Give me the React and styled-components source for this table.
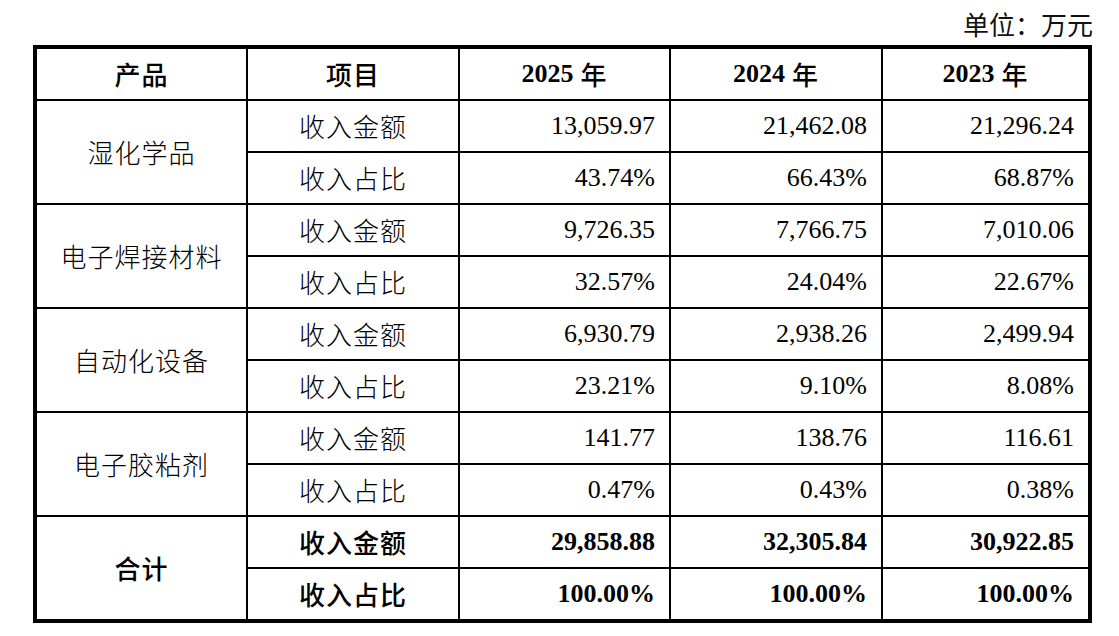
import React from "react";
import styled, { createGlobalStyle } from "styled-components";

const Global = createGlobalStyle`
  html, body { margin: 0; padding: 0; background: #fff; }
  body { font-family: "Liberation Serif", "Noto Sans CJK SC", serif; color: #000; }
`;

const Page = styled.div`
  width: 1059px;
  margin-left: 33px;
`;

const Unit = styled.div`
  height: 45px;
  display: flex;
  justify-content: flex-end;
  align-items: flex-start;
  padding-top: 11px;
  box-sizing: border-box;
  font-family: "Noto Sans CJK SC", sans-serif;
  font-size: 26px;
  line-height: 26px;
  color: #111;
  margin-right: -1px;
`;

const Grid = styled.div`
  display: grid;
  grid-template-columns: 211px 212px 211px 212px 205px;
  grid-template-rows: repeat(10, 52px) 50px;
  border: 4px solid #000;
  width: fit-content;
`;

const Cell = styled.div`
  box-sizing: border-box;
  display: flex;
  align-items: center;
  justify-content: ${(p) => (p.$align === "right" ? "flex-end" : "center")};
  padding-right: ${(p) => (p.$align === "right" ? "14px" : "0")};
  border-right: ${(p) => (p.$lastCol ? "none" : "2px solid #000")};
  border-bottom: ${(p) => (p.$lastRow ? "none" : "2px solid #000")};
  grid-row: ${(p) => (p.$span ? `span ${p.$span}` : "auto")};
  font-size: 26px;
  line-height: 1;
  white-space: pre;
`;

const Han = styled.span`
  font-family: "Noto Sans CJK SC", sans-serif;
  font-weight: ${(p) => (p.$strong ? 500 : 300)};
  letter-spacing: 1px;
`;

const Num = styled.span`
  font-family: "Liberation Serif", "Noto Sans CJK SC", serif;
  font-weight: ${(p) => (p.$bold ? 700 : 400)};
`;

const YearHead = styled.span`
  display: inline-flex;
  align-items: center;
  gap: 7px;
`;

const years = ["2025", "2024", "2023"];

const groups = [
  {
    name: "湿化学品",
    amount: ["13,059.97", "21,462.08", "21,296.24"],
    share: ["43.74%", "66.43%", "68.87%"],
  },
  {
    name: "电子焊接材料",
    amount: ["9,726.35", "7,766.75", "7,010.06"],
    share: ["32.57%", "24.04%", "22.67%"],
  },
  {
    name: "自动化设备",
    amount: ["6,930.79", "2,938.26", "2,499.94"],
    share: ["23.21%", "9.10%", "8.08%"],
  },
  {
    name: "电子胶粘剂",
    amount: ["141.77", "138.76", "116.61"],
    share: ["0.47%", "0.43%", "0.38%"],
  },
  {
    name: "合计",
    amount: ["29,858.88", "32,305.84", "30,922.85"],
    share: ["100.00%", "100.00%", "100.00%"],
    total: true,
  },
];

function DataRow({ label, values, total, lastRow }) {
  return (
    <>
      <Cell $lastRow={lastRow}>
        <Han $strong={total}>{label}</Han>
      </Cell>
      {values.map((v, i) => (
        <Cell key={i} $align="right" $lastCol={i === 2} $lastRow={lastRow}>
          <Num $bold={total}>{v}</Num>
        </Cell>
      ))}
    </>
  );
}

export default function App() {
  return (
    <>
      <Global />
      <Page>
        <Unit>单位：万元</Unit>
        <Grid>
          <Cell>
            <Han $strong>产品</Han>
          </Cell>
          <Cell>
            <Han $strong>项目</Han>
          </Cell>
          {years.map((y, i) => (
            <Cell key={y} $lastCol={i === 2}>
              <YearHead>
                <Num $bold>{y}</Num>
                <Han $strong>年</Han>
              </YearHead>
            </Cell>
          ))}
          {groups.map((g, gi) => {
            const last = gi === groups.length - 1;
            return (
              <React.Fragment key={g.name}>
                <Cell $span={2} $lastRow={last}>
                  <Han $strong={g.total}>{g.name}</Han>
                </Cell>
                <DataRow label="收入金额" values={g.amount} total={g.total} />
                <DataRow
                  label="收入占比"
                  values={g.share}
                  total={g.total}
                  lastRow={last}
                />
              </React.Fragment>
            );
          })}
        </Grid>
      </Page>
    </>
  );
}
